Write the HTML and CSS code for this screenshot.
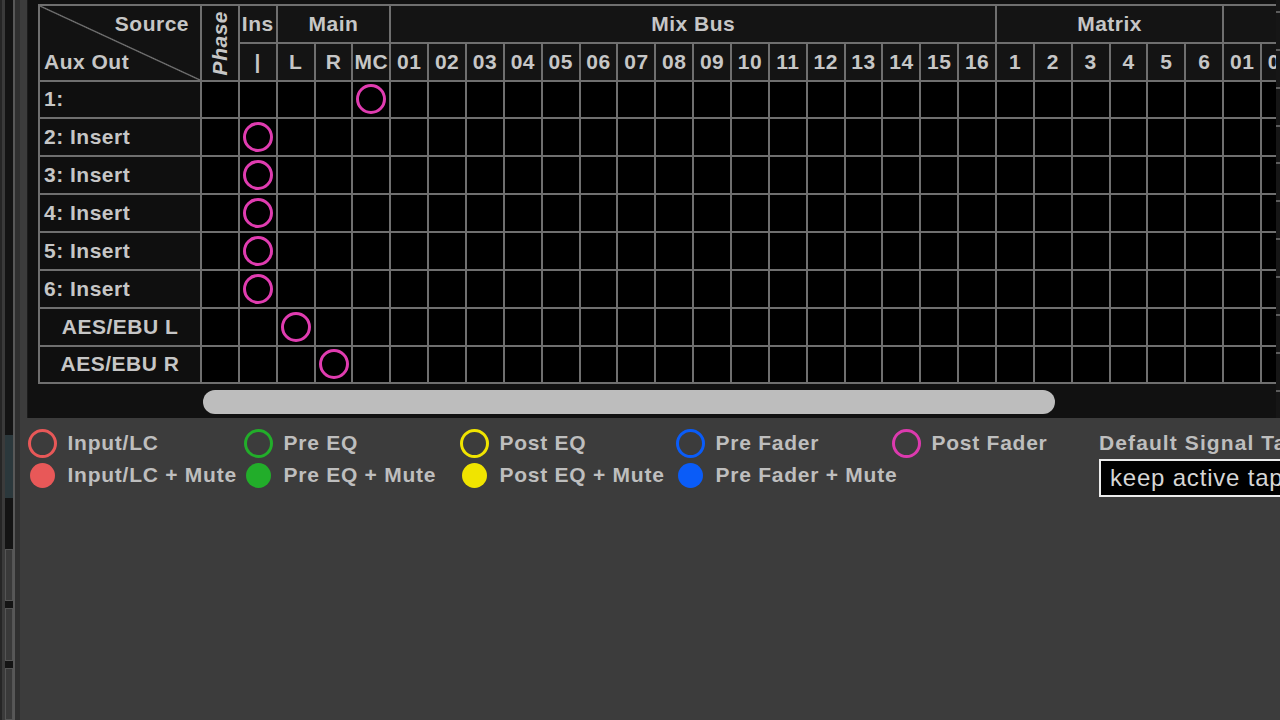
FILE: index.html
```html
<!DOCTYPE html>
<html>
<head>
<meta charset="utf-8">
<title>Aux Out Routing</title>
<link rel="stylesheet" href="styles.css">
</head>
<body>
<div class="app">
  <div class="strip">
    <div class="s1"></div>
    <div class="s2"></div>
    <div class="s3">
      <div class="slot"></div>
      <div class="btn first"></div>
      <div class="btn"></div>
      <div class="btn"></div>
    </div>
    <div class="s4"></div>
    <div class="s5"></div>
  </div>
  <div class="main">
    <div class="matrixbox">
      <div class="tablewrap">
        <div class="grid">
          <div class="h corner"><span class="src">Source</span><span class="aux">Aux Out</span></div>
          <div class="h phase"><span>Phase</span></div>
          <div class="h">Ins</div>
          <div class="h span3">Main</div>
          <div class="h span16">Mix Bus</div>
          <div class="h span6">Matrix</div>
          <div class="h span3"></div>

          <div class="h">|</div>
          <div class="h">L</div><div class="h">R</div><div class="h">MC</div>
          <div class="h">01</div><div class="h">02</div><div class="h">03</div><div class="h">04</div>
          <div class="h">05</div><div class="h">06</div><div class="h">07</div><div class="h">08</div>
          <div class="h">09</div><div class="h">10</div><div class="h">11</div><div class="h">12</div>
          <div class="h">13</div><div class="h">14</div><div class="h">15</div><div class="h">16</div>
          <div class="h">1</div><div class="h">2</div><div class="h">3</div>
          <div class="h">4</div><div class="h">5</div><div class="h">6</div>
          <div class="h">01</div><div class="h">02</div><div class="h">03</div>

          <div class="lab">1:</div>
          <div class="d"></div><div class="d"></div><div class="d"></div><div class="d"></div><div class="d"><span class="ring"></span></div>
          <div class="d"></div><div class="d"></div><div class="d"></div><div class="d"></div><div class="d"></div>
          <div class="d"></div><div class="d"></div><div class="d"></div><div class="d"></div><div class="d"></div>
          <div class="d"></div><div class="d"></div><div class="d"></div><div class="d"></div><div class="d"></div>
          <div class="d"></div><div class="d"></div><div class="d"></div><div class="d"></div><div class="d"></div>
          <div class="d"></div><div class="d"></div><div class="d"></div><div class="d"></div><div class="d"></div>

          <div class="lab">2: Insert</div>
          <div class="d"></div><div class="d"><span class="ring"></span></div><div class="d"></div><div class="d"></div><div class="d"></div>
          <div class="d"></div><div class="d"></div><div class="d"></div><div class="d"></div><div class="d"></div>
          <div class="d"></div><div class="d"></div><div class="d"></div><div class="d"></div><div class="d"></div>
          <div class="d"></div><div class="d"></div><div class="d"></div><div class="d"></div><div class="d"></div>
          <div class="d"></div><div class="d"></div><div class="d"></div><div class="d"></div><div class="d"></div>
          <div class="d"></div><div class="d"></div><div class="d"></div><div class="d"></div><div class="d"></div>

          <div class="lab">3: Insert</div>
          <div class="d"></div><div class="d"><span class="ring"></span></div><div class="d"></div><div class="d"></div><div class="d"></div>
          <div class="d"></div><div class="d"></div><div class="d"></div><div class="d"></div><div class="d"></div>
          <div class="d"></div><div class="d"></div><div class="d"></div><div class="d"></div><div class="d"></div>
          <div class="d"></div><div class="d"></div><div class="d"></div><div class="d"></div><div class="d"></div>
          <div class="d"></div><div class="d"></div><div class="d"></div><div class="d"></div><div class="d"></div>
          <div class="d"></div><div class="d"></div><div class="d"></div><div class="d"></div><div class="d"></div>

          <div class="lab">4: Insert</div>
          <div class="d"></div><div class="d"><span class="ring"></span></div><div class="d"></div><div class="d"></div><div class="d"></div>
          <div class="d"></div><div class="d"></div><div class="d"></div><div class="d"></div><div class="d"></div>
          <div class="d"></div><div class="d"></div><div class="d"></div><div class="d"></div><div class="d"></div>
          <div class="d"></div><div class="d"></div><div class="d"></div><div class="d"></div><div class="d"></div>
          <div class="d"></div><div class="d"></div><div class="d"></div><div class="d"></div><div class="d"></div>
          <div class="d"></div><div class="d"></div><div class="d"></div><div class="d"></div><div class="d"></div>

          <div class="lab">5: Insert</div>
          <div class="d"></div><div class="d"><span class="ring"></span></div><div class="d"></div><div class="d"></div><div class="d"></div>
          <div class="d"></div><div class="d"></div><div class="d"></div><div class="d"></div><div class="d"></div>
          <div class="d"></div><div class="d"></div><div class="d"></div><div class="d"></div><div class="d"></div>
          <div class="d"></div><div class="d"></div><div class="d"></div><div class="d"></div><div class="d"></div>
          <div class="d"></div><div class="d"></div><div class="d"></div><div class="d"></div><div class="d"></div>
          <div class="d"></div><div class="d"></div><div class="d"></div><div class="d"></div><div class="d"></div>

          <div class="lab">6: Insert</div>
          <div class="d"></div><div class="d"><span class="ring"></span></div><div class="d"></div><div class="d"></div><div class="d"></div>
          <div class="d"></div><div class="d"></div><div class="d"></div><div class="d"></div><div class="d"></div>
          <div class="d"></div><div class="d"></div><div class="d"></div><div class="d"></div><div class="d"></div>
          <div class="d"></div><div class="d"></div><div class="d"></div><div class="d"></div><div class="d"></div>
          <div class="d"></div><div class="d"></div><div class="d"></div><div class="d"></div><div class="d"></div>
          <div class="d"></div><div class="d"></div><div class="d"></div><div class="d"></div><div class="d"></div>

          <div class="lab center">AES/EBU L</div>
          <div class="d"></div><div class="d"></div><div class="d"><span class="ring"></span></div><div class="d"></div><div class="d"></div>
          <div class="d"></div><div class="d"></div><div class="d"></div><div class="d"></div><div class="d"></div>
          <div class="d"></div><div class="d"></div><div class="d"></div><div class="d"></div><div class="d"></div>
          <div class="d"></div><div class="d"></div><div class="d"></div><div class="d"></div><div class="d"></div>
          <div class="d"></div><div class="d"></div><div class="d"></div><div class="d"></div><div class="d"></div>
          <div class="d"></div><div class="d"></div><div class="d"></div><div class="d"></div><div class="d"></div>

          <div class="lab center">AES/EBU R</div>
          <div class="d"></div><div class="d"></div><div class="d"></div><div class="d"><span class="ring"></span></div><div class="d"></div>
          <div class="d"></div><div class="d"></div><div class="d"></div><div class="d"></div><div class="d"></div>
          <div class="d"></div><div class="d"></div><div class="d"></div><div class="d"></div><div class="d"></div>
          <div class="d"></div><div class="d"></div><div class="d"></div><div class="d"></div><div class="d"></div>
          <div class="d"></div><div class="d"></div><div class="d"></div><div class="d"></div><div class="d"></div>
          <div class="d"></div><div class="d"></div><div class="d"></div><div class="d"></div><div class="d"></div>
        </div>
        <div class="scroll"><div class="thumb"></div></div>
      </div>
      <div class="edge"></div>
    </div>
    <div class="legend">
      <div class="keys">
        <div class="key"><span class="sw red"><span class="o"></span></span>Input/LC</div>
        <div class="key"><span class="sw green"><span class="o"></span></span>Pre EQ</div>
        <div class="key"><span class="sw yellow"><span class="o"></span></span>Post EQ</div>
        <div class="key"><span class="sw blue"><span class="o"></span></span>Pre Fader</div>
        <div class="key"><span class="sw mag"><span class="o"></span></span>Post Fader</div>
        <div class="key"><span class="sw red"><span class="f"></span></span>Input/LC + Mute</div>
        <div class="key"><span class="sw green"><span class="f"></span></span>Pre EQ + Mute</div>
        <div class="key"><span class="sw yellow"><span class="f"></span></span>Post EQ + Mute</div>
        <div class="key"><span class="sw blue"><span class="f"></span></span>Pre Fader + Mute</div>
      </div>
      <div class="tap">
        <div class="tap-label">Default Signal Tap</div>
        <div class="tap-box">keep active tap</div>
      </div>
    </div>
  </div>
</div>
</body>
</html>
```
FILE: styles.css
```css
html, body {
  margin: 0;
  padding: 0;
}
body {
  background: #3c3c3c;
  font-family: "Liberation Sans", Arial, sans-serif;
}
.app {
  display: flex;
  width: 1280px;
  height: 720px;
  overflow: hidden;
}

/* left edge strip */
.strip {
  width: 20px;
  flex: none;
  display: flex;
  background: #1c1c1c;
}
.s1 { width: 2px; background: #262626; }
.s2 { width: 3px; background: #3b3b3b; }
.s3 {
  width: 8px;
  background: #141414;
  display: flex;
  flex-direction: column;
}
.slot {
  margin-top: 435px;
  height: 65px;
  background: #2b383c;
}
.btn {
  margin-top: 7px;
  height: 54px;
  box-sizing: border-box;
  border: 1px solid #555555;
  background: #3a3a3a;
}
.btn.first { margin-top: 51px; }
.s4 { width: 2px; background: #585858; }
.s5 { width: 5px; background: #303030; }

/* main panel */
.main {
  flex: 1;
  min-width: 0;
  padding-left: 7px;
  display: flex;
  flex-direction: column;
  background: #3c3c3c;
}
.matrixbox {
  height: 418px;
  flex: none;
  display: flex;
  background: #111111;
  border-left: 1px solid #1c1c1c;
}
.tablewrap {
  flex: 1;
  min-width: 0;
  overflow: hidden;
  padding: 4px 0 0 10px;
  display: flex;
  flex-direction: column;
}
.grid {
  align-self: flex-start;
  flex: none;
  display: grid;
  grid-template-columns: 160px repeat(30, 35.86px);
  grid-template-rows: 35.5px 36px repeat(8, 35.86px);
  gap: 2px;
  padding: 2px;
  background: #6f6f6f;
  color: #c6c6c6;
  font-weight: bold;
  font-size: 21px;
  letter-spacing: 0.5px;
  white-space: nowrap;
}
.h {
  background: #141414;
  display: flex;
  align-items: center;
  justify-content: center;
}
.span3 { grid-column: span 3; }
.span6 { grid-column: span 6; }
.span16 { grid-column: span 16; }
.corner {
  grid-row: span 2;
  flex-direction: column;
  align-items: stretch;
  justify-content: space-between;
  background:
    linear-gradient(to top right, transparent calc(50% - 1.2px), #7a7a7a 50%, transparent calc(50% + 1.2px)),
    #121212;
}
.corner .src {
  text-align: right;
  padding-right: 11px;
  line-height: 36px;
}
.corner .aux {
  padding-left: 4px;
  line-height: 37px;
}
.phase {
  grid-row: span 2;
  background: #111111;
}
.phase span {
  writing-mode: vertical-rl;
  transform: rotate(180deg);
  font-style: italic;
}
.lab {
  background: #0f0f0f;
  display: flex;
  align-items: center;
  padding-left: 4px;
}
.lab.center {
  justify-content: center;
  padding-left: 0;
}
.d {
  background: #000000;
  display: flex;
  align-items: center;
  justify-content: center;
}
.ring {
  width: 30px;
  height: 30px;
  box-sizing: border-box;
  border: 3px solid #e03cb0;
  border-radius: 50%;
}
.scroll {
  flex: 1;
  padding-top: 6px;
}
.thumb {
  margin-left: 165px;
  width: 852px;
  height: 24px;
  border-radius: 12px;
  background: #bdbdbd;
}
.edge {
  width: 4px;
  flex: none;
  background: repeating-linear-gradient(to bottom, #161616 0 11px, #5c5c5c 11px 13px, #161616 13px 37.86px);
}

/* legend */
.legend {
  display: flex;
  padding-top: 9px;
  padding-left: 1px;
  overflow: hidden;
}
.keys {
  flex: none;
  display: grid;
  grid-template-columns: repeat(4, 216px) 207px;
  grid-auto-rows: 32px;
}
.key {
  display: flex;
  align-items: center;
  gap: 10.5px;
  color: #bebebe;
  font-weight: bold;
  font-size: 21px;
  letter-spacing: 0.75px;
  white-space: nowrap;
}
.sw {
  width: 29px;
  height: 29px;
  flex: none;
  display: flex;
  align-items: center;
  justify-content: center;
}
.sw .o {
  width: 29px;
  height: 29px;
  box-sizing: border-box;
  border: 3px solid currentColor;
  border-radius: 50%;
}
.sw .f {
  width: 25px;
  height: 25px;
  border-radius: 50%;
  background: currentColor;
}
.red { color: #e85858; }
.green { color: #22ad2a; }
.yellow { color: #f0e400; }
.blue { color: #0a5cf8; }
.mag { color: #dc3aae; }

.tap {
  flex: none;
  width: 240px;
}
.tap-label {
  height: 32px;
  display: flex;
  align-items: center;
  color: #bebebe;
  font-weight: bold;
  font-size: 21px;
  letter-spacing: 1.1px;
  white-space: nowrap;
}
.tap-box {
  height: 38px;
  box-sizing: border-box;
  border: 2px solid #ececec;
  background: #000000;
  color: #d6d6d6;
  font-size: 24px;
  letter-spacing: 0.8px;
  padding-left: 9px;
  display: flex;
  align-items: center;
  white-space: nowrap;
  overflow: hidden;
}
```
